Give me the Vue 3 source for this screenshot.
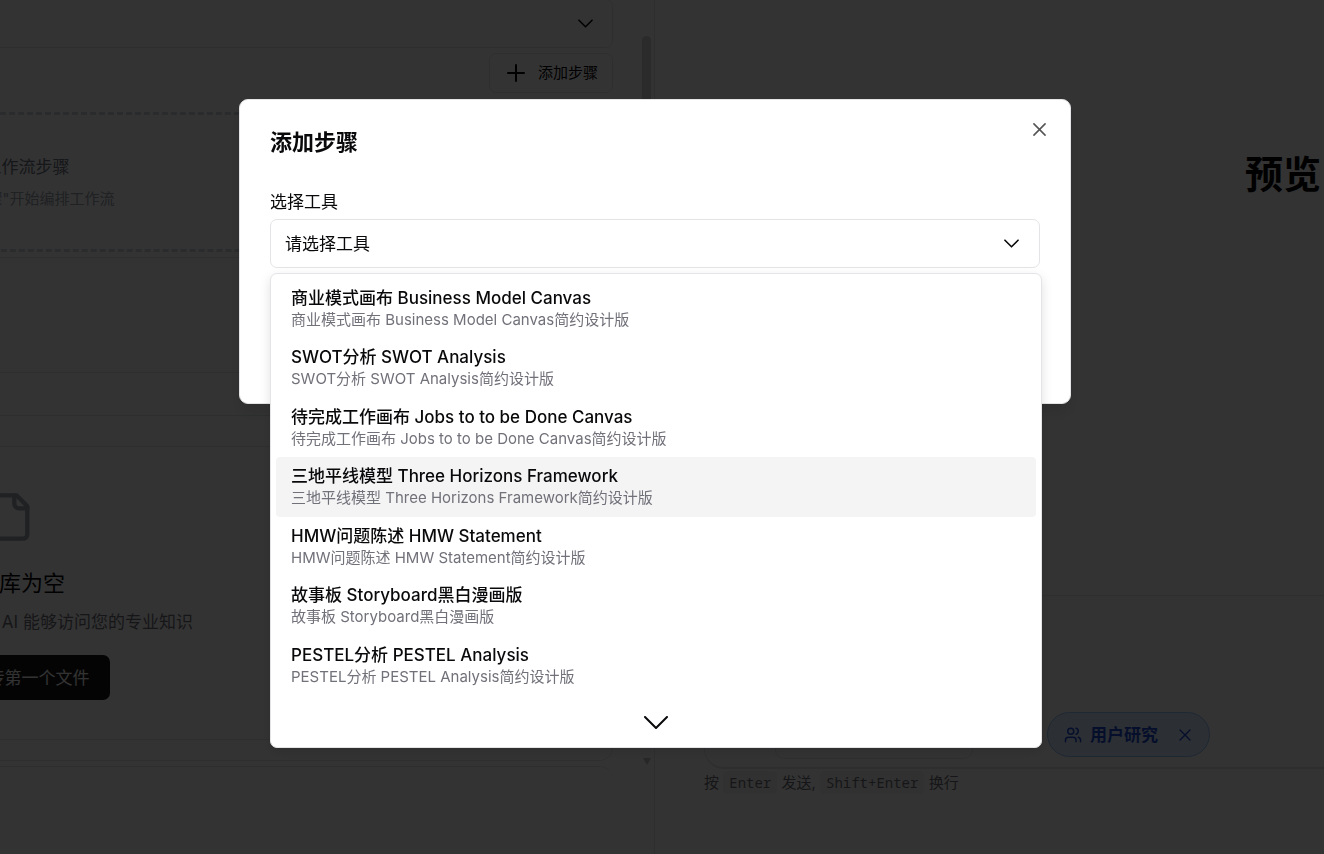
<template>
  <div class="page">
    <section class="editor">
      <div class="editor-scroll">
        <div class="editor-content">
          <button class="type-select" type="button" aria-label="展开">
            <svg class="chevron" viewBox="0 0 16 9"><path d="M1 1l7 7 7-7" /></svg>
          </button>
          <div class="step-bar">
            <button class="add-step" type="button">
              <svg class="plus" viewBox="0 0 18 18"><path d="M9 1v16M1 9h16" /></svg>
              添加步骤
            </button>
          </div>
          <div class="empty-steps">
            <p class="empty-title">暂无工作流步骤</p>
            <p class="empty-hint">点击"添加步骤"开始编排工作流</p>
          </div>
          <div class="line-steps"></div>
          <div class="line-body"></div>
          <div class="line-card"></div>
          <div class="knowledge">
            <div class="knowledge-body">
              <svg class="file-icon" viewBox="0 0 24 24">
                <path d="M15 2H6a2 2 0 0 0-2 2v16a2 2 0 0 0 2 2h12a2 2 0 0 0 2-2V7Z" />
                <path d="M14 2v4a2 2 0 0 0 2 2h4" />
              </svg>
              <h3>知识库为空</h3>
              <p>上传文件到知识库，让 AI 能够访问您的专业知识</p>
              <button class="upload" type="button">上传第一个文件</button>
            </div>
          </div>
          <div class="next-card"></div>
        </div>
      </div>
      <div class="scrollbar">
        <div class="thumb"></div>
        <svg class="scroll-arrow" viewBox="0 0 8 7"><path d="M0 0h8L4 7z" /></svg>
      </div>
    </section>

    <section class="preview">
      <h1>预览</h1>
      <div class="composer">
        <div class="toolbar">
          <span class="model"></span>
          <span class="chip">
            <svg class="users" viewBox="0 0 24 24">
              <path d="M16 21v-2a4 4 0 0 0-4-4H6a4 4 0 0 0-4 4v2" />
              <circle cx="9" cy="7" r="4" />
              <path d="M22 21v-2a4 4 0 0 0-3-3.87M16 3.13a4 4 0 0 1 0 7.75" />
            </svg>
            <span>用户研究</span>
            <button type="button" aria-label="移除">
              <svg class="chip-close" viewBox="0 0 12 12"><path d="M1 1l10 10M11 1L1 11" /></svg>
            </button>
          </span>
        </div>
      </div>
      <p class="shortcut">按 <kbd>Enter</kbd> 发送, <kbd>Shift+Enter</kbd> 换行</p>
    </section>

    <div class="overlay">
      <div class="dialog" role="dialog" aria-labelledby="dialog-title">
        <h2 id="dialog-title">添加步骤</h2>
        <button class="close" type="button" aria-label="关闭">
          <svg viewBox="0 0 14 14"><path d="M1 1l12 12M13 1L1 13" /></svg>
        </button>
        <label for="tool">选择工具</label>
        <div class="field">
          <select id="tool" v-model="selected">
            <option value="">请选择工具</option>
            <option v-for="tool in tools" :key="tool.name" :value="tool.name">{{ tool.name }}</option>
          </select>
          <svg class="chevron" viewBox="0 0 16 9"><path d="M1 1l7 7 7-7" /></svg>
          <div class="menu">
            <ul>
              <li v-for="(tool, index) in tools" :key="tool.name">
                <button
                  type="button"
                  :class="['option', { active: index === activeIndex }]"
                  @mouseenter="activeIndex = index"
                  @click="selected = tool.name"
                >
                  <span class="name">{{ tool.name }}</span>
                  <span class="desc">{{ tool.desc }}</span>
                </button>
              </li>
            </ul>
            <div class="more">
              <svg viewBox="0 0 24 13"><path d="M1 1l11 11L23 1" /></svg>
            </div>
          </div>
        </div>
      </div>
    </div>
  </div>
</template>

<script setup>
import { ref } from 'vue';

const selected = ref('');
const activeIndex = ref(3);

const tools = [
  { name: '商业模式画布 Business Model Canvas', desc: '商业模式画布 Business Model Canvas简约设计版' },
  { name: 'SWOT分析 SWOT Analysis', desc: 'SWOT分析 SWOT Analysis简约设计版' },
  { name: '待完成工作画布 Jobs to to be Done Canvas', desc: '待完成工作画布 Jobs to to be Done Canvas简约设计版' },
  { name: '三地平线模型 Three Horizons Framework', desc: '三地平线模型 Three Horizons Framework简约设计版' },
  { name: 'HMW问题陈述 HMW Statement', desc: 'HMW问题陈述 HMW Statement简约设计版' },
  { name: '故事板 Storyboard黑白漫画版', desc: '故事板 Storyboard黑白漫画版' },
  { name: 'PESTEL分析 PESTEL Analysis', desc: 'PESTEL分析 PESTEL Analysis简约设计版' },
];
</script>

<style>
body {
  overflow: hidden;
}
</style>

<style scoped>
* {
  box-sizing: border-box;
}
.page {
  display: flex;
  height: 100vh;
  overflow: hidden;
  background-color: #fff;
  color: #09090b;
  font-family: Inter, "Noto Sans CJK SC", sans-serif;
  font-size: 17px;
  line-height: 24px;
}
h1, h2, h3, p, ul {
  margin: 0;
  padding: 0;
}
ul {
  list-style: none;
}
button, select {
  font: inherit;
  color: inherit;
  margin: 0;
  padding: 0;
  border: none;
  background: none;
  cursor: pointer;
}
svg {
  display: block;
  flex: none;
  fill: none;
  stroke: currentColor;
  stroke-width: 2;
  stroke-linecap: round;
  stroke-linejoin: round;
}
.chevron {
  width: 15px;
  height: 9px;
  stroke-width: 1.7;
}

/* left side */
.editor {
  flex: 0 0 655px;
  min-width: 0;
  display: flex;
  border-right: 1px solid #e5e7eb;
}
.editor-scroll {
  flex: 1;
  min-width: 0;
  display: flex;
  flex-direction: column;
  align-items: flex-end;
  overflow: hidden;
  padding-right: 29px;
}
.editor-content {
  width: 1206px;
  flex: none;
  display: flex;
  flex-direction: column;
}
.type-select {
  display: flex;
  align-items: center;
  justify-content: flex-end;
  height: 49px;
  margin-top: -1px;
  padding-right: 19px;
  border: 1px solid #e5e7eb;
  border-radius: 7px;
}
.step-bar {
  display: flex;
  justify-content: flex-end;
  margin-top: 5px;
}
.add-step {
  display: flex;
  align-items: center;
  gap: 13px;
  height: 40px;
  padding: 0 14px 1px 17px;
  border: 1px solid #e5e7eb;
  border-radius: 7px;
  font-size: 15px;
}
.plus {
  width: 18px;
  height: 18px;
}
.empty-steps {
  height: 140px;
  margin-top: 19px;
  padding-top: 40px;
  border: 3px dashed #d1d5db;
  border-radius: 9px;
  text-align: center;
}
.empty-title {
  color: #6b7280;
}
.empty-hint {
  margin-top: 8px;
  font-size: 15px;
  color: #9ca3af;
}
.line-steps, .line-body, .line-card {
  border-bottom: 1px solid #e5e7eb;
}
.line-steps {
  height: 6px;
}
.line-body {
  height: 115px;
}
.line-card {
  height: 43px;
}
.knowledge {
  margin-top: 30px;
  padding-bottom: 20px;
  border: 1px solid #e5e7eb;
  border-radius: 13px;
}
.knowledge-body {
  display: flex;
  flex-direction: column;
  align-items: center;
  padding: 44px 0 39px;
  border-bottom: 1px solid #e5e7eb;
}
.file-icon {
  width: 52px;
  height: 52px;
  color: #9ca3af;
}
.knowledge h3 {
  margin-top: 26px;
  font-size: 22px;
  font-weight: 400;
  line-height: 28px;
}
.knowledge p {
  margin-top: 13px;
  color: #71717a;
}
.upload {
  width: 199px;
  height: 45px;
  margin-top: 21px;
  padding-right: 20px;
  border-radius: 7px;
  background-color: #18181b;
  color: #fafafa;
  text-align: right;
}
.next-card {
  height: 200px;
  margin-top: 5px;
  border: 1px solid #e5e7eb;
  border-right: none;
  border-radius: 13px;
}
.scrollbar {
  flex: none;
  width: 12px;
  display: flex;
  flex-direction: column;
  align-items: center;
  justify-content: space-between;
  padding: 36px 3px 89px 0;
}
.thumb {
  width: 9px;
  height: 300px;
  border-radius: 5px;
  background-color: #d4d4d4;
}
.scroll-arrow {
  width: 8px;
  height: 7px;
  fill: #c1c1c1;
  stroke: none;
}

/* right side */
.preview {
  flex: 1;
  min-width: 0;
  display: flex;
  flex-direction: column;
  padding-left: 49px;
}
.preview h1 {
  flex: 1;
  padding: 150px 3px 0 0;
  text-align: right;
  font-size: 38px;
  line-height: 48px;
}
.composer {
  display: flex;
  align-items: flex-end;
  height: 174px;
  border: 1px solid #e5e7eb;
  border-bottom-width: 2px;
  border-right: none;
  border-radius: 20px 0 0 20px;
  padding: 0 0 8px 70px;
}
.toolbar {
  display: flex;
  align-items: center;
  gap: 74px;
}
.model {
  width: 198px;
  height: 49px;
  border: 1px solid #e5e7eb;
  border-radius: 9px;
}
.chip {
  display: flex;
  align-items: center;
  gap: 8px;
  height: 45px;
  padding: 0 18px 0 16px;
  border: 1px solid #93c5fd;
  border-radius: 23px;
  background-color: #dbeafe;
  color: #1d4ed8;
  font-weight: 700;
}
.chip button {
  margin-left: 13px;
}
.users {
  width: 18px;
  height: 18px;
}
.chip-close {
  width: 12px;
  height: 12px;
  stroke-width: 1.4;
}
.shortcut {
  height: 85px;
  padding-top: 2px;
  font-size: 15px;
  color: #71717a;
}
kbd {
  padding: 2px 6px;
  border-radius: 4px;
  background-color: #f4f4f5;
  font-family: "Noto Sans Mono", "DejaVu Sans Mono", monospace;
  font-size: 14px;
}

/* dialog */
.overlay {
  position: fixed;
  inset: 0;
  display: flex;
  align-items: flex-start;
  justify-content: center;
  padding: 99px 14px 0 0;
  background-color: rgba(0, 0, 0, 0.8);
}
.dialog {
  position: relative;
  width: 100%;
  max-width: 832px;
  min-height: 305px;
  padding: 28px 30px;
  border: 1px solid #e4e4e7;
  border-radius: 9px;
  background-color: #fff;
  box-shadow: 0 10px 15px rgba(0, 0, 0, 0.1);
}
.dialog h2 {
  font-size: 22px;
  line-height: 28px;
}
.close {
  position: absolute;
  top: 23px;
  right: 24px;
  color: #555;
}
.close svg {
  width: 13px;
  height: 13px;
  stroke-width: 1.7;
}
.dialog label {
  display: block;
  margin-top: 34px;
}
.field {
  position: relative;
  margin-top: 5px;
}
.field select {
  display: block;
  width: 100%;
  height: 49px;
  padding: 0 14px;
  appearance: none;
  border: 1px solid #e4e4e7;
  border-radius: 7px;
  background-color: #fff;
}
.field > .chevron {
  position: absolute;
  top: 20px;
  right: 21px;
  pointer-events: none;
}
.menu {
  position: absolute;
  top: 54px;
  left: 0;
  width: calc(100% + 2px);
  padding: 5px;
  border: 1px solid #e4e4e7;
  border-radius: 7px;
  background-color: #fff;
  box-shadow: 0 4px 12px rgba(0, 0, 0, 0.12);
}
.menu ul {
  display: grid;
  grid-auto-rows: 1fr;
  height: 416px;
}
.option {
  display: flex;
  flex-direction: column;
  align-items: flex-start;
  width: 100%;
  height: 100%;
  padding: 7px 15px;
  border-radius: 4px;
  text-align: left;
}
.option.active {
  background-color: #f4f4f5;
}
.name {
  font-weight: 500;
}
.desc {
  font-size: 15px;
  line-height: 19px;
  color: #71717a;
}
.more {
  display: flex;
  justify-content: center;
  padding: 21px 0 13px;
}
.more svg {
  width: 24px;
  height: 13px;
}
</style>
